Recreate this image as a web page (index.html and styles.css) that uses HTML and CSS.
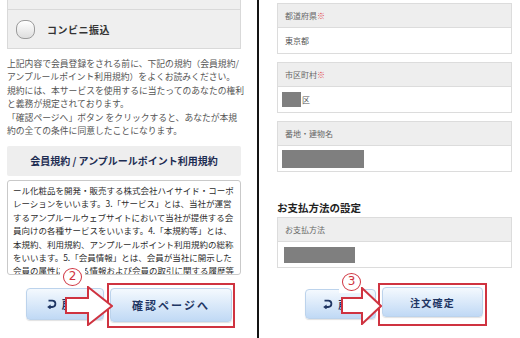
FILE: index.html
```html
<!DOCTYPE html>
<html lang="ja">

<head>
    <meta charset="UTF-8">
    <meta name="viewport" content="width=device-width, initial-scale=1.0">
    <title>会員登録・注文確認</title>
    <link rel="stylesheet" href="styles.css">
</head>

<body>
    <div class="shot shot-left">
        <div class="pay-box">
            <div class="pay-row-top"></div>
            <div class="pay-row">
                <span class="radio"></span>
                <span class="pay-name">コンビニ振込</span>
            </div>
        </div>
        <p class="notice">
            上記内容で会員登録をされる前に、下記の規約（会員規約/<br>
            アンプルールポイント利用規約）をよくお読みください。<br>
            規約には、本サービスを使用するに当たってのあなたの権利<br>
            と義務が規定されております。<br>
            「確認ページへ」ボタン をクリックすると、あなたが本規<br>
            約の全ての条件に同意したことになります。
        </p>
        <h2 class="terms-title">会員規約 / アンプルールポイント利用規約</h2>
        <div class="terms-body">
            ール化粧品を開発・販売する株式会社ハイサイド・コーポ<br>
            レーションをいいます。3.「サービス」とは、当社が運営<br>
            するアンプルールウェブサイトにおいて当社が提供する会<br>
            員向けの各種サービスをいいます。4.「本規約等」とは、<br>
            本規約、利用規約、アンプルールポイント利用規約の総称<br>
            をいいます。5.「会員情報」とは、会員が当社に開示した<br>
            会員の属性に関する情報および会員の取引に関する履歴等
        </div>
        <div class="btn-row">
            <a class="btn btn-back">
                <svg class="back-icon" viewBox="0 0 10 10" width="10" height="10">
                    <path d="M1.5 1.6 H5.2 A3.2 3.2 0 0 1 5.2 8 H3" fill="none" stroke="#1f3664" stroke-width="1.8"/>
                    <polygon points="0.2,8 3.6,5.4 3.6,10.6" fill="#1f3664"/>
                </svg>
                戻る
            </a>
            <span class="hl"><a class="btn btn-main">確認ページへ</a></span>
            <span class="step"><span class="step-num">2</span></span>
            <svg class="arrow" viewBox="0 0 48 40" width="48" height="40">
                <polygon points="1,12 23,12 23,1 47,20 23,39 23,27 1,27" fill="#fff" stroke="#cf3340" stroke-width="2" stroke-linejoin="miter"/>
            </svg>
        </div>
    </div>

    <div class="divider"></div>

    <div class="shot shot-right">
        <div class="field">
            <div class="field-head">都道府県<span class="req">※</span></div>
            <div class="field-body">東京都</div>
        </div>
        <div class="field">
            <div class="field-head">市区町村<span class="req">※</span></div>
            <div class="field-body"><span class="mask mask-city"></span>区</div>
        </div>
        <div class="field">
            <div class="field-head">番地・建物名</div>
            <div class="field-body"><span class="mask mask-addr"></span></div>
        </div>
        <h2 class="pay-title">お支払方法の設定</h2>
        <div class="field field-pay">
            <div class="field-head">お支払方法</div>
            <div class="field-body"><span class="mask mask-pay"></span></div>
        </div>
        <div class="btn-row">
            <a class="btn btn-back">
                <svg class="back-icon" viewBox="0 0 10 10" width="10" height="10">
                    <path d="M1.5 1.6 H5.2 A3.2 3.2 0 0 1 5.2 8 H3" fill="none" stroke="#1f3664" stroke-width="1.8"/>
                    <polygon points="0.2,8 3.6,5.4 3.6,10.6" fill="#1f3664"/>
                </svg>
                戻る
            </a>
            <span class="hl"><a class="btn btn-main">注文確定</a></span>
            <span class="step"><span class="step-num">3</span></span>
            <svg class="arrow" viewBox="0 0 41 38" width="41" height="38">
                <polygon points="1,11 21,11 21,1 40,19 21,37 21,26 1,26" fill="#fff" stroke="#cf3340" stroke-width="2" stroke-linejoin="miter"/>
            </svg>
        </div>
    </div>
</body>

</html>
```

FILE: styles.css
```css
* {
    margin: 0;
    padding: 0;
    box-sizing: border-box;
}

html,
body {
    width: 100%;
    height: 100%;
}

body {
    display: flex;
    overflow: hidden;
    background: #fff;
    color: #555;
    font-family: "Noto Sans CJK JP", "Noto Sans", sans-serif;
}

.shot {
    height: 338px;
    overflow: hidden;
}

.shot-left {
    width: 257px;
    padding: 0 16px 0 7px;
}

.divider {
    width: 2px;
    background: #141414;
}

.shot-right {
    flex: 1;
    padding: 3px 8px 0 18px;
}

/* left: payment choice + terms */

.pay-box {
    background: #efefef;
    border: 1px solid #d9d9d9;
    border-top: none;
}

.pay-row-top {
    height: 10px;
    border-bottom: 1px solid #d9d9d9;
}

.pay-row {
    height: 38px;
    display: flex;
    align-items: center;
    gap: 12px;
    padding-left: 8px;
}

.radio {
    width: 19px;
    height: 19px;
    border-radius: 8px;
    border: 1px solid #9b9b9b;
    background: linear-gradient(#ffffff, #dedede);
}

.pay-name {
    font-size: 10px;
    font-weight: bold;
    letter-spacing: 0.5px;
    color: #333;
}

.notice {
    margin-top: 8px;
    font-size: 8.8px;
    line-height: 13.4px;
    white-space: nowrap;
}

.terms-title {
    margin-top: 8.5px;
    height: 30px;
    display: flex;
    align-items: center;
    justify-content: center;
    background: #eeeeee;
    border-radius: 2px;
    font-size: 10px;
    font-weight: bold;
    color: #1d2c52;
}

.terms-body {
    margin-top: 4px;
    height: 95px;
    overflow: hidden;
    padding: 3px 5px;
    border: 1px solid #c9c9c9;
    border-radius: 3px;
    font-size: 8.5px;
    line-height: 13.4px;
    white-space: nowrap;
    color: #2c2c2c;
}

/* buttons */

.btn-row {
    position: relative;
    display: flex;
    align-items: flex-start;
    margin-top: 8px;
}

.btn {
    display: flex;
    align-items: center;
    justify-content: center;
    gap: 5px;
    border: 1px solid #bcd3ec;
    border-radius: 4px;
    background: linear-gradient(#f4f9fe, #c0d9f5);
    box-shadow: 0 1px 1px rgba(0, 0, 0, 0.12);
    color: #1f3664;
    font-weight: bold;
    font-size: 11px;
}

.back-icon {
    display: block;
}

.hl {
    border: 2px solid #cf3340;
}

.shot-left .btn-back {
    margin: 5px 0 0 19px;
    width: 78px;
    height: 32px;
}

.shot-left .hl {
    margin-left: 3px;
    padding: 3px 1px 4px;
}

.shot-left .btn-main {
    width: 122px;
    height: 34px;
    letter-spacing: 2px;
}

.shot-right .btn-back {
    margin: 6px 0 0 28px;
    width: 71px;
    height: 30px;
    font-size: 10px;
}

.shot-right .hl {
    margin-left: 2px;
    padding: 2px 2px 7px;
}

.shot-right .btn-main {
    width: 101px;
    height: 30px;
    font-size: 10px;
    letter-spacing: 1.2px;
}

.step {
    position: absolute;
    padding: 1px 3px 2px;
    background: #fff;
}

.step-num {
    display: block;
    width: 19px;
    height: 18px;
    border: 1.4px solid #cf3340;
    border-radius: 50%;
    color: #cf3340;
    font-family: "DejaVu Sans", sans-serif;
    font-size: 12px;
    line-height: 15px;
    text-align: center;
}

.arrow {
    position: absolute;
    z-index: 2;
}

.shot-left .step {
    left: 53px;
    top: -16px;
}

.shot-left .arrow {
    left: 58px;
    top: 3px;
}

.shot-right .step {
    left: 62px;
    top: -11px;
}

.shot-right .arrow {
    left: 64px;
    top: 4px;
}

/* right: address fields */

.field {
    border: 1px solid #dcdcdc;
    font-size: 8px;
}

.field + .field {
    margin-top: 8px;
}

.field-head {
    height: 24px;
    display: flex;
    align-items: center;
    padding-left: 7px;
    background: #eeeeee;
    border-bottom: 1px solid #dcdcdc;
    color: #666;
}

.req {
    color: #e0404a;
}

.field-body {
    height: 25px;
    display: flex;
    align-items: center;
    padding-left: 7px;
    color: #555;
}

.mask {
    display: block;
    margin-left: -3px;
    background: #7f7f7f;
}

.mask-city {
    width: 19px;
    height: 15px;
    margin-right: 1px;
}

.mask-addr {
    width: 82px;
    height: 18px;
}

.mask-pay {
    width: 71px;
    height: 16px;
    margin-left: -1px;
}

.pay-title {
    margin-top: 28px;
    font-size: 10.5px;
    line-height: 16px;
    font-weight: bold;
    color: #222;
}

.field-pay {
    margin-top: 1px;
}

.shot-right .btn-row {
    margin-top: 15px;
}
```
